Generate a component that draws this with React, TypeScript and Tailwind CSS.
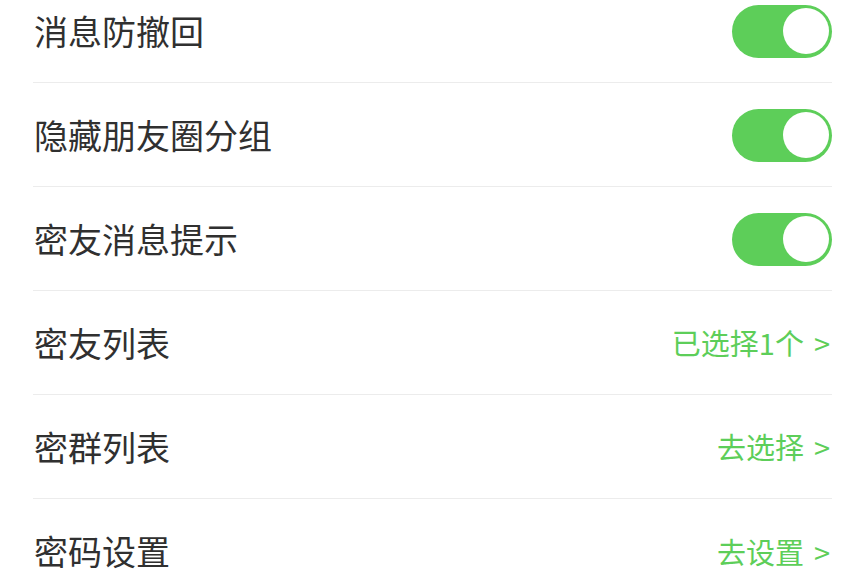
import React from "react";

const font = { fontFamily: '"Noto Sans CJK SC", "Noto Sans", sans-serif' };

function Toggle() {
  return (
    <div className="flex h-[53px] w-[100px] items-center justify-end rounded-full bg-[#5dce59] pr-[3px]">
      <div className="h-[46px] w-[46px] rounded-full bg-white" />
    </div>
  );
}

function Link({ text }: { text: string }) {
  return (
    <div className="flex items-center text-[29px] text-[#5dce59]">
      <span>{text}</span>
      <span className="ml-[10px] mr-[2px]">&gt;</span>
    </div>
  );
}

const rows: { label: string; right: React.ReactNode }[] = [
  { label: "消息防撤回", right: <Toggle /> },
  { label: "隐藏朋友圈分组", right: <Toggle /> },
  { label: "密友消息提示", right: <Toggle /> },
  { label: "密友列表", right: <Link text="已选择1个" /> },
  { label: "密群列表", right: <Link text="去选择" /> },
  { label: "密码设置", right: <Link text="去设置" /> },
];

export default function App() {
  return (
    <div className="h-[576px] w-[864px] overflow-hidden bg-white" style={font}>
      <div className="-mt-[21px] ml-[33px] w-[799px]">
        {rows.map((r, i) => (
          <div
            key={i}
            className={`flex h-[104px] items-center justify-between ${i < rows.length - 1 ? "border-b border-[#ececec]" : ""}`}
          >
            <span className="pl-[1px] text-[34px] leading-none text-[#303030]">{r.label}</span>
            <div className="pt-px">{r.right}</div>
          </div>
        ))}
      </div>
    </div>
  );
}
